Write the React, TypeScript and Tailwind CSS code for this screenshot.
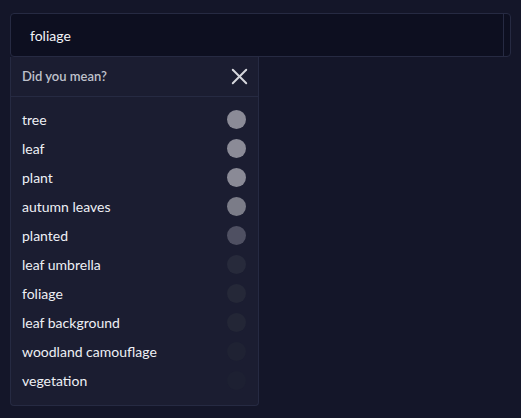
import { X } from "lucide-react";

const suggestions = [
  { label: "tree", dot: "bg-[#8b8b97]" },
  { label: "leaf", dot: "bg-[#8b8b97]" },
  { label: "plant", dot: "bg-[#8a8a96]" },
  { label: "autumn leaves", dot: "bg-[#7b7c88]" },
  { label: "planted", dot: "bg-[#4f5062]" },
  { label: "leaf umbrella", dot: "bg-[#272a3b]" },
  { label: "foliage", dot: "bg-[#252838]" },
  { label: "leaf background", dot: "bg-[#232636]" },
  { label: "woodland camouflage", dot: "bg-[#1f2233]" },
  { label: "vegetation", dot: "bg-[#1d2032]" },
];

export default function App() {
  return (
    <div
      className="w-[521px] h-[418px] bg-[#141629] pt-[13px] px-[10px] overflow-hidden"
      style={{ fontFamily: "Lato, 'Noto Sans', sans-serif" }}
    >
      {/* Search input */}
      <div className="flex h-[44px] rounded-[4px] border border-[#262a42] bg-[#0d0f20]">
        <div className="flex-1 flex items-center pl-[19px] text-[14px] text-[#f2f3f7]">
          foliage
        </div>
        <div className="w-[7px] border-l border-[#262a42]" />
      </div>

      {/* Did you mean dropdown */}
      <div className="w-[249px] rounded-b-[4px] border border-t-0 border-[#262a42] bg-[#1b1d31]">
        <div className="flex items-center justify-between h-[40px] pl-[11px] pr-[5px] border-b border-[#262a42]">
          <span className="text-[13px] font-semibold text-[#bfc1cb]">Did you mean?</span>
          <X size={27} strokeWidth={1.7} className="text-[#d6d7dd]" />
        </div>
        <ul className="pt-[8px] pb-[10px]">
          {suggestions.map((s) => (
            <li key={s.label} className="flex items-center justify-between h-[29px] pl-[11px] pr-[12px]">
              <span className="text-[14px] text-[#eef0f5]">{s.label}</span>
              <span className={`w-[19px] h-[19px] rounded-full ${s.dot}`} />
            </li>
          ))}
        </ul>
      </div>
    </div>
  );
}
